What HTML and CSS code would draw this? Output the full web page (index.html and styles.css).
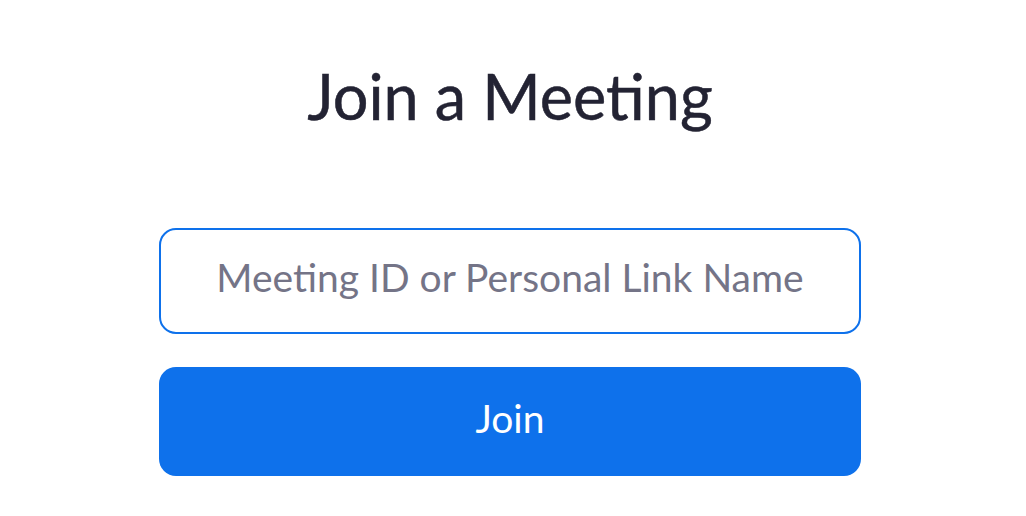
FILE: index.html
```html
<!doctype html>
<html lang="en">
<head>
    <meta charset="UTF-8">
    <title>Join a Meeting</title>
    <link rel="stylesheet" href="styles.css">
</head>
<body>
<div class="join">
    <h1 class="title">Join a Meeting</h1>
    <input class="meeting-id" type="text" placeholder="Meeting ID or Personal Link Name">
    <button class="join-btn">Join</button>
</div>
</body>
</html>
```
FILE: styles.css
```css
*{
    margin: 0;
    padding: 0;
    box-sizing: border-box;
}
body{
    background: #fff;
    font-family: Lato, "Open Sans", sans-serif;
}
.join{
    width: 702px;
    margin-left: 159px;
    display: flex;
    flex-direction: column;
}
.title{
    font-size: 63px;
    font-weight: 400;
    color: #232333;
    -webkit-text-stroke: 0.5px #232333;
    text-align: center;
    line-height: 76px;
    margin-top: 58px;
    margin-bottom: 94px;
}
.meeting-id{
    height: 106px;
    padding-bottom: 8px;
    border: 2px solid #0e71eb;
    border-radius: 17px;
    font-family: Lato, "Open Sans", sans-serif;
    font-size: 39px;
    text-align: center;
    color: #232333;
    outline: none;
}
.meeting-id::placeholder{
    color: #747487;
}
.join-btn{
    height: 109px;
    margin-top: 33px;
    padding-bottom: 8px;
    border: none;
    border-radius: 17px;
    background: #0e71eb;
    color: #fff;
    font-family: Lato, "Open Sans", sans-serif;
    font-size: 39px;
}
```
